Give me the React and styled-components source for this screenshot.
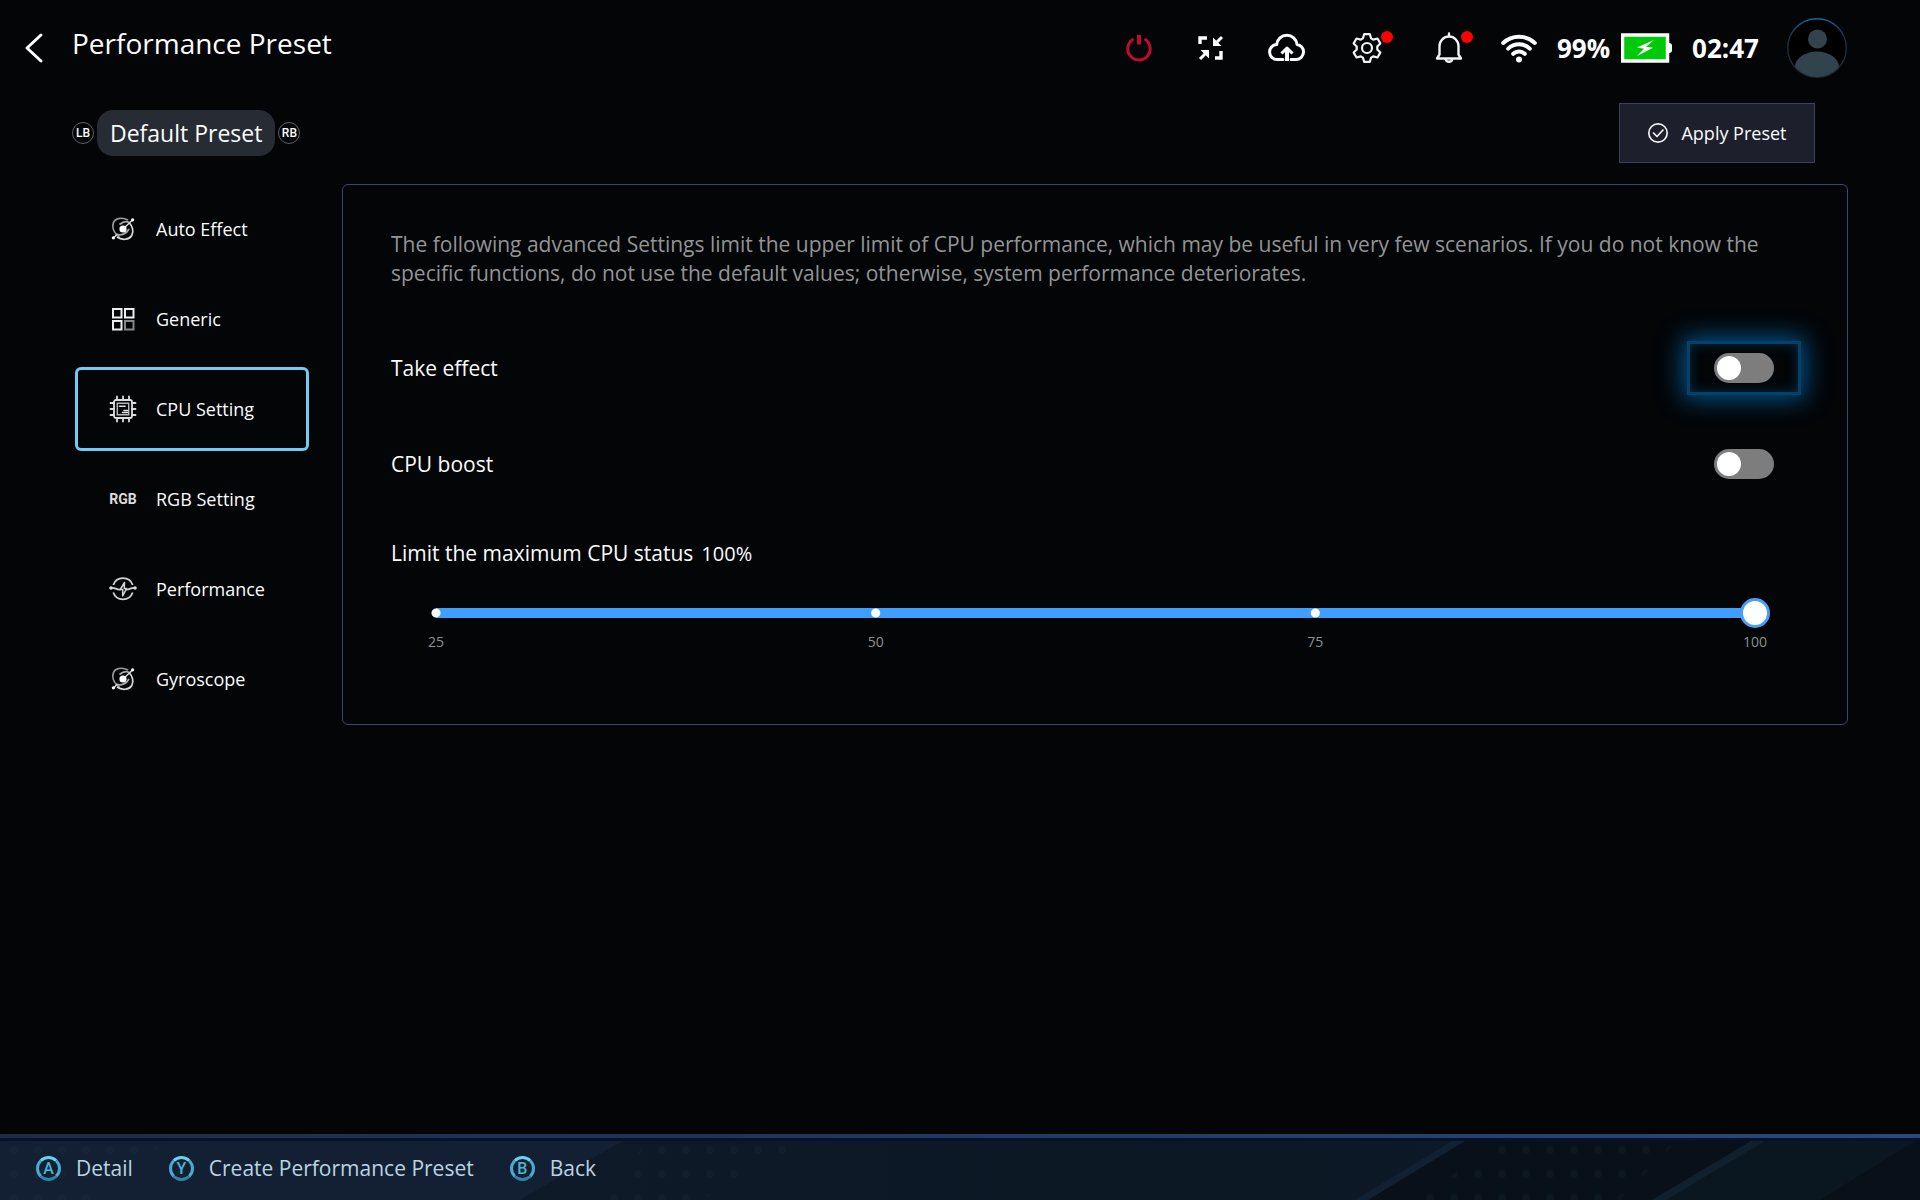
import React, { useState } from "react";
import styled, { createGlobalStyle, css } from "styled-components";

const Global = createGlobalStyle`
  *, *::before, *::after { box-sizing: border-box; }
  body {
    margin: 0;
    background: #030507;
    color: #fbfcfd;
    font-family: "Open Sans", "Noto Sans", sans-serif;
  }
  button, input, output { font: inherit; color: inherit; }
  button { margin: 0; padding: 0; border: 0; background: none; cursor: pointer; }
`;

const Screen = styled.div`
  min-height: 100vh;
  display: flex;
  flex-direction: column;
`;

const Header = styled.header`
  display: flex;
  align-items: center;
  height: 96px;
  padding: 0 73px 0 24px;
`;

const IconButton = styled.button`
  display: flex;
  align-items: center;
  justify-content: center;
  position: relative;
  width: ${(p) => p.$width || 40}px;
  height: 40px;
  svg { display: block; }
`;

const Title = styled.h1`
  margin: 0 0 10px 28px;
  font-size: 28px;
  line-height: 36px;
  font-weight: 400;
  white-space: nowrap;
`;

const StatusBar = styled.div`
  display: flex;
  align-items: center;
  gap: 30px;
  margin-left: auto;
`;

const Tools = styled.div`
  display: flex;
  align-items: center;
  gap: 36px;
`;

const Badge = styled.span`
  position: absolute;
  top: 3px;
  right: -2px;
  width: 12px;
  height: 12px;
  border-radius: 50%;
  background: #ff0000;
`;

const StatusText = styled.span`
  font-size: 26px;
  line-height: 36px;
  font-weight: 700;
  color: #fff;
`;

const System = styled.div`
  display: flex;
  align-items: center;
  gap: 20px;
  svg { display: block; }
`;

const Charge = styled.div`
  display: flex;
  align-items: center;
  gap: 11px;
`;

const Avatar = styled.div`
  margin-left: 8px;
`;

const PresetBar = styled.div`
  display: flex;
  align-items: center;
  justify-content: space-between;
  height: 88px;
  padding: 0 105px 14px 72px;
`;

const PresetSwitcher = styled.div`
  display: flex;
  align-items: center;
  gap: 3px;
`;

const Bumper = styled.button`
  && {
    width: 22px;
    height: 22px;
    border: 1px solid #5c5f63;
    border-radius: 50%;
    font-family: Roboto, sans-serif;
    font-size: 12px;
    line-height: 20px;
    font-weight: 500;
    text-align: center;
  }
`;

const PresetName = styled.span`
  padding: 0 13px;
  border-radius: 16px;
  background: #272c34;
  font-size: 23px;
  line-height: 46px;
  white-space: nowrap;
`;

const ApplyButton = styled.button`
  && {
    display: flex;
    align-items: center;
    justify-content: center;
    gap: 12px;
    width: 196px;
    height: 60px;
    border: 1px solid #3a4260;
    background: #1d202c;
    font-size: 18px;
    white-space: nowrap;
  }
`;

const Main = styled.main`
  display: flex;
  align-items: flex-start;
  flex: 1;
  gap: 33px;
  padding: 0 72px 0 75px;
`;

const Nav = styled.nav`
  display: flex;
  flex-direction: column;
  flex: none;
  gap: 6px;
  width: 234px;
  padding-top: 3px;
`;

const NavItem = styled.button`
  && {
    display: flex;
    align-items: center;
    gap: 19px;
    height: 84px;
    padding: 0 0 0 31px;
    border: 3px solid ${(p) => (p.$active ? "#74c9f5" : "transparent")};
    border-radius: 6px;
    font-size: 18px;
    line-height: 24px;
    white-space: nowrap;
  }
`;

const NavIcon = styled.span`
  display: flex;
  justify-content: center;
  width: 28px;
  color: #dcdcdc;
  font-family: Roboto, sans-serif;
  font-size: 14px;
  font-weight: 700;
  svg { display: block; }
`;

const Panel = styled.section`
  flex: 1;
  min-width: 0;
  padding: 45px 73px 72px 48px;
  border: 1px solid #3c466c;
  border-radius: 6px;
`;

const Note = styled.p`
  margin: 0;
  color: #939496;
  font-size: 21px;
  line-height: 29px;
`;

const SettingList = styled.div`
  margin-top: 32px;
`;

const SettingRow = styled.div`
  display: flex;
  align-items: center;
  justify-content: space-between;
  height: 96px;
  font-size: 21px;
  line-height: 28px;
`;

const FocusFrame = styled.span`
  display: flex;
  padding: 9px 24px;
  margin-right: -27px;
  border: 3px solid transparent;
  ${(p) =>
    p.$focused &&
    css`
      border-color: #02426c;
      box-shadow: 0 0 24px 4px #00558c, inset 0 0 12px #002b48;
    `}
`;

const Switch = styled.input.attrs({ type: "checkbox", role: "switch" })`
  appearance: none;
  display: block;
  width: 60px;
  height: 30px;
  margin: 0;
  padding: 3px;
  border-radius: 15px;
  background: #7d7d7d;
  outline: none;
  cursor: pointer;
  &::before {
    content: "";
    display: block;
    width: 24px;
    height: 24px;
    border-radius: 50%;
    background: #fff;
  }
  &:checked { background: #409eff; }
  &:checked::before { margin-left: 30px; }
`;

const LimitHeading = styled.div`
  display: flex;
  align-items: baseline;
  gap: 8px;
  margin-top: 27px;
  font-size: 21px;
  line-height: 28px;
  output { font-size: 20px; }
`;

const SliderBox = styled.div`
  margin: 30px 4px 0 30px;
`;

const dot = (x) =>
  `radial-gradient(circle at ${x} 50%, #fff 4px, transparent 5px)`;

const Slider = styled.input.attrs({ type: "range" })`
  appearance: none;
  display: block;
  width: 100%;
  height: 30px;
  margin: 0;
  outline: none;
  background: ${dot("15px")}, ${dot("calc(15px + (100% - 30px) / 3)")},
    ${dot("calc(15px + (100% - 30px) * 2 / 3)")},
    linear-gradient(#409eff, #409eff) center / calc(100% - 30px) 10px no-repeat;
  cursor: pointer;
  &::-webkit-slider-thumb {
    appearance: none;
    width: 30px;
    height: 30px;
    border: 3px solid #4a9ff5;
    border-radius: 50%;
    background: #fff;
  }
`;

const Scale = styled.div`
  display: flex;
  justify-content: space-between;
  margin-top: 4px;
  color: #909193;
  font-size: 14px;
  line-height: 20px;
  span { width: 30px; text-align: center; }
`;

const Footer = styled.footer`
  position: relative;
  display: flex;
  align-items: center;
  gap: 36px;
  height: 66px;
  padding: 2px 36px 0;
  background:
    linear-gradient(90deg, #252b3e, #223556 40%, #2b4878) top / 100% 4px no-repeat,
    linear-gradient(90deg, #101b2b, #0d1825 60%, #0e1a28);
`;

const FooterArt = styled.svg`
  position: absolute;
  inset: 4px 0 0;
  width: 100%;
  height: 62px;
`;

const Hint = styled.button`
  && {
    display: flex;
    align-items: center;
    gap: 15px;
    position: relative;
    color: #bcd3e2;
    font-size: 21px;
    line-height: 28px;
    white-space: nowrap;
  }
`;

const Key = styled.span`
  width: 25px;
  height: 25px;
  border: 3px solid;
  border-color: #67d3ef #4cabca #2f83a5;
  border-radius: 50%;
  color: #4cb4d2;
  font-family: Roboto, sans-serif;
  font-size: 16px;
  line-height: 20px;
  font-weight: 500;
  text-align: center;
`;

const BackIcon = () => (
  <svg width="20" height="32" viewBox="0 0 20 32" fill="none" stroke="#fff" strokeWidth="3" strokeLinecap="round" strokeLinejoin="round">
    <path d="M17 3 3 16l14 13" />
  </svg>
);

const PowerIcon = () => (
  <svg width="28" height="30" viewBox="0 0 28 30" fill="none" stroke="#c00a33" strokeWidth="3">
    <path d="M7.500 6.600a11.200 11.200 0 1 0 13 0" strokeLinecap="round" />
    <path d="M14 2v9.500" strokeWidth="4" />
  </svg>
);

const CompressIcon = () => (
  <svg width="26" height="26" viewBox="0 0 26 26" fill="none" stroke="#fff" strokeWidth="3">
    <path d="M2 9V3h7M17 23h6v-7" strokeWidth="3.4" />
    <path d="m24 2-6 6M2 24l6-6" />
    <path d="M15 2.500V11h8.500zM11 23.500V15H2.500z" fill="#fff" stroke="none" />
  </svg>
);

const CloudIcon = () => (
  <svg width="38" height="30" viewBox="0 0 38 30" fill="none" stroke="#fff" strokeWidth="3" strokeLinejoin="round">
    <path d="M15 26.500H9.500a7.500 7.500 0 0 1-.8-15A10.200 10.200 0 0 1 29 11.400a7.600 7.600 0 0 1-.5 15.100H23" strokeLinecap="round" />
    <path d="M19 28V16" strokeWidth="4" />
    <path d="m13.500 20.500 5.500-5.500 5.500 5.500" />
  </svg>
);

const GearIcon = () => (
  <svg width="32" height="32" viewBox="0 0 32 32" fill="none" stroke="#f2f2f2" strokeWidth="2.200" strokeLinejoin="round">
    <path d="M13.200 2.200h5.600l1.300 4.200 2.100 1.200 4.300-1.100 2.800 4.900-3 3.200v2.800l3 3.200-2.800 4.900-4.300-1.100-2.100 1.200-1.300 4.200h-5.600l-1.300-4.200-2.100-1.200-4.300 1.100-2.800-4.900 3-3.200v-2.800l-3-3.200 2.800-4.900 4.300 1.100 2.100-1.200z" />
    <circle cx="16" cy="16" r="5" />
  </svg>
);

const BellIcon = () => (
  <svg width="28" height="32" viewBox="0 0 28 32" fill="none" stroke="#f2f2f2" strokeWidth="2.400" strokeLinejoin="round" strokeLinecap="round">
    <path d="M14 1.500V4M2 26.500h24l-2.500-4V14a9.500 9.500 0 0 0-19 0v8.500zM10.500 27a3.600 3.600 0 0 0 7 0" />
  </svg>
);

const WifiIcon = () => (
  <svg width="36" height="30" viewBox="0 0 36 30" fill="none" stroke="#fff" strokeWidth="4" strokeLinecap="round">
    <path d="M2.200 10a23 23 0 0 1 31.600 0M7.200 15.600a15.800 15.800 0 0 1 21.600 0M12.200 20.800a8.600 8.600 0 0 1 11.600 0" />
    <circle cx="18" cy="26.500" r="3" fill="#fff" stroke="none" />
  </svg>
);

const BatteryIcon = () => (
  <svg width="51" height="30" viewBox="0 0 51 30">
    <path d="M46 10h2a3 3 0 0 1 3 3v4a3 3 0 0 1-3 3h-2z" fill="#fff" />
    <rect x="1.500" y="2" width="45" height="26" fill="#00c80a" stroke="#fff" strokeWidth="3.500" />
    <path d="M33 7 16 14.600l7 1.200-7 7.200 16-8.200-7-1z" fill="#fff" />
  </svg>
);

const AvatarIcon = () => (
  <svg width="60" height="60" viewBox="0 0 60 60">
    <defs>
      <clipPath id="avatar-clip"><circle cx="30" cy="30" r="29" /></clipPath>
      <linearGradient id="avatar-ring" x1="0" y1="0" x2="0" y2="1">
        <stop offset="0" stopColor="#1266a8" />
        <stop offset="0.300" stopColor="#1c3142" />
        <stop offset="1" stopColor="#1b2a36" />
      </linearGradient>
    </defs>
    <circle cx="30" cy="30" r="29.300" fill="#000" stroke="url(#avatar-ring)" strokeWidth="1.400" />
    <g fill="#31434c" clipPath="url(#avatar-clip)">
      <circle cx="30.500" cy="21" r="9.500" />
      <ellipse cx="30" cy="49" rx="22" ry="15.500" />
    </g>
  </svg>
);

const CheckIcon = () => (
  <svg width="22" height="22" viewBox="0 0 22 22" fill="none" stroke="#f0f0f0" strokeWidth="1.700" strokeLinecap="round" strokeLinejoin="round">
    <circle cx="11" cy="11" r="9.200" />
    <path d="m6.500 11 3.500 3.500 6-6.500" />
  </svg>
);

const OrbitIcon = () => (
  <svg width="24" height="24" viewBox="0 0 24 24" fill="none" stroke="#dcdcdc" strokeWidth="1.700">
    <path d="M17 3C10-.5 3 1.500 2 7.500c-.8 4.500 2 9.500 6.500 12.500" stroke="#999" />
    <path d="M6 20c5 3.500 12 3 14.800-1.500C23 14.500 21.500 9 18 5.500" />
    <path d="M5 17c5 2 10.500 0 13-5M8.500 7.500C12 4.500 16 4 18.500 5.800" stroke="#a9a9a9" />
    <path d="M2.500 21 6 17.500M12 12l9-8.500" strokeWidth="1.500" />
    <circle cx="12" cy="12" r="3.600" fill="#fff" stroke="none" />
    <circle cx="21.600" cy="2.800" r="1.600" fill="#fff" stroke="none" />
    <circle cx="2.400" cy="20.800" r="1.600" fill="#fff" stroke="none" />
  </svg>
);

const GridIcon = () => (
  <svg width="24" height="24" viewBox="0 0 24 24" fill="none" stroke="#eee" strokeWidth="2">
    <path d="M2 2h8.500v8.500H2zM14 2h8.500v8.500H14zM2 14h8.500v8.500H2z" />
    <path d="M14 14h8.500v8.500H14z" stroke="#888" />
  </svg>
);

const ChipIcon = () => (
  <svg width="28" height="28" viewBox="0 0 28 28" fill="none" stroke="#dedede" strokeWidth="1.800" strokeLinecap="round">
    <path d="M8 1.500V5M14 1.500V5M20 1.500V5M8 23v3.500M14 23v3.500M20 23v3.500M1.500 8H5M1.500 14H5M1.500 20H5M23 8h3.500M23 14h3.500M23 20h3.500" />
    <rect x="5" y="5" width="18" height="18" rx="2" />
    <path d="M8.300 8.300h11.400v11.400H8.300z" strokeWidth="1.400" stroke="#b8b8b8" />
    <path d="M10.500 11.200h5.500M13.500 17.500h5M15 15.500h3.500" strokeWidth="1.600" />
  </svg>
);

const PowerFlowIcon = () => (
  <svg width="28" height="24" viewBox="0 0 28 24" fill="none" stroke="#d4d4d4" strokeWidth="1.800" strokeLinejoin="round">
    <path d="M4.300 8a10.300 10.300 0 0 1 19.400 0M4.300 15.500a10.300 10.300 0 0 0 19.400 0" />
    <path d="M2 11c4-1 5 2 9.500 1.500M16.500 12.500c4.500.5 5.500-2.500 9.500-1.500" />
    <path d="M15.500 5.500 11.200 12.500h2.500v6.500l3.800-7.500h-2.300z" strokeWidth="1.500" />
    <circle cx="2" cy="11" r="1.800" fill="#ddd" stroke="none" />
    <circle cx="26" cy="11" r="1.800" fill="#ddd" stroke="none" />
  </svg>
);

const navItems = [
  { label: "Auto Effect", icon: <OrbitIcon /> },
  { label: "Generic", icon: <GridIcon /> },
  { label: "CPU Setting", icon: <ChipIcon /> },
  { label: "RGB Setting", icon: "RGB" },
  { label: "Performance", icon: <PowerFlowIcon /> },
  { label: "Gyroscope", icon: <OrbitIcon /> },
];

export default function App() {
  const [active, setActive] = useState("CPU Setting");
  const [limit, setLimit] = useState(100);

  return (
    <Screen>
      <Global />
      <Header>
        <IconButton $width={20} aria-label="Back"><BackIcon /></IconButton>
        <Title>Performance Preset</Title>
        <StatusBar>
          <Tools>
            <IconButton $width={32} aria-label="Power"><PowerIcon /></IconButton>
            <IconButton aria-label="Exit full screen"><CompressIcon /></IconButton>
            <IconButton aria-label="Cloud upload"><CloudIcon /></IconButton>
            <IconButton $width={48} aria-label="Settings"><GearIcon /><Badge /></IconButton>
            <IconButton $width={44} aria-label="Notifications"><BellIcon /><Badge /></IconButton>
          </Tools>
          <System>
            <WifiIcon />
            <Charge>
              <StatusText>99%</StatusText>
              <BatteryIcon />
            </Charge>
            <StatusText>02:47</StatusText>
            <Avatar><AvatarIcon /></Avatar>
          </System>
        </StatusBar>
      </Header>

      <PresetBar>
        <PresetSwitcher>
          <Bumper>LB</Bumper>
          <PresetName>Default Preset</PresetName>
          <Bumper>RB</Bumper>
        </PresetSwitcher>
        <ApplyButton><CheckIcon />Apply Preset</ApplyButton>
      </PresetBar>

      <Main>
        <Nav>
          {navItems.map(({ label, icon }) => (
            <NavItem key={label} $active={label === active} onClick={() => setActive(label)}>
              <NavIcon>{icon}</NavIcon>
              {label}
            </NavItem>
          ))}
        </Nav>
        <Panel>
          <Note>
            The following advanced Settings limit the upper limit of CPU performance, which may be
            useful in very few scenarios. If you do not know the specific functions, do not use the
            default values; otherwise, system performance deteriorates.
          </Note>
          <SettingList>
            <SettingRow>
              <label htmlFor="take-effect">Take effect</label>
              <FocusFrame $focused><Switch id="take-effect" /></FocusFrame>
            </SettingRow>
            <SettingRow>
              <label htmlFor="cpu-boost">CPU boost</label>
              <FocusFrame><Switch id="cpu-boost" /></FocusFrame>
            </SettingRow>
          </SettingList>
          <LimitHeading>
            <label htmlFor="cpu-limit">Limit the maximum CPU status</label>
            <output htmlFor="cpu-limit">{limit}%</output>
          </LimitHeading>
          <SliderBox>
            <Slider id="cpu-limit" min="25" max="100" value={limit} onChange={(e) => setLimit(Number(e.target.value))} />
            <Scale><span>25</span><span>50</span><span>75</span><span>100</span></Scale>
          </SliderBox>
        </Panel>
      </Main>

      <Footer>
        <FooterArt viewBox="0 0 1920 62" preserveAspectRatio="none" aria-hidden="true">
          <defs>
            <pattern id="footer-dots" width="24" height="24" patternUnits="userSpaceOnUse">
              <circle cx="14" cy="12" r="4" fill="#2a4664" opacity="0.080" />
            </pattern>
          </defs>
          <path d="M0 0h628L520 62H0z" fill="#132033" />
          <path d="M1462 0h458v62H1357z" fill="#08111a" />
          <path d="M1457 0h13L1368 62h-13z" fill="#122132" />
          <path d="M1760 0h160L1820 62H1652z" fill="#0b1720" />
          <path d="M1756 0h14L1666 62h-14z" fill="#11202d" />
          <path d="M0 0h170L90 62H0zM650 0h170L700 62H600zM1500 0h180l-60 62H1420z" fill="url(#footer-dots)" />
          <path d="M0 0h1920v3H0z" fill="#03122e" />
        </FooterArt>
        <Hint><Key>A</Key>Detail</Hint>
        <Hint><Key>Y</Key>Create Performance Preset</Hint>
        <Hint><Key>B</Key>Back</Hint>
      </Footer>
    </Screen>
  );
}
